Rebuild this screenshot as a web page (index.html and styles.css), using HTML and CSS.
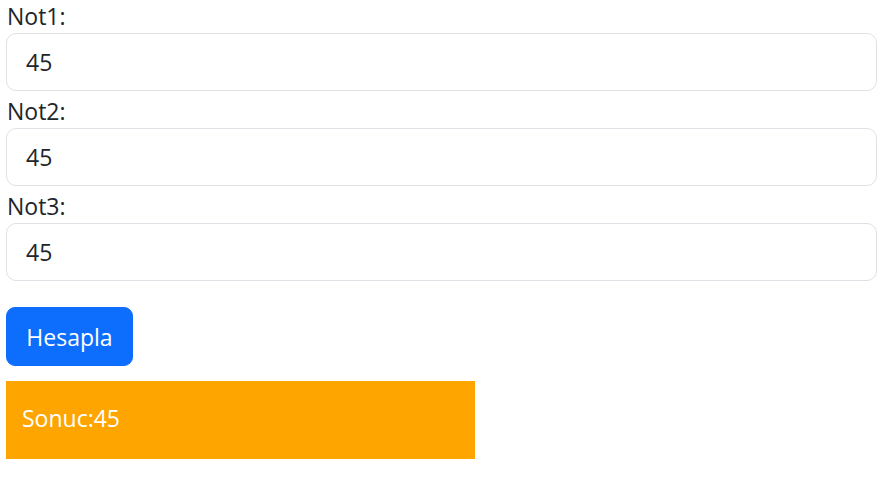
FILE: index.html
```html
<!DOCTYPE html>
<html lang="tr">
<head>
<meta charset="utf-8">
<title>Not Hesapla</title>
<link rel="stylesheet" href="styles.css">
</head>
<body>
<div class="page">
  <form class="form">
    <label class="label" for="n1">Not1:</label>
    <input class="field" id="n1" type="text" value="45">
    <label class="label" for="n2">Not2:</label>
    <input class="field" id="n2" type="text" value="45">
    <label class="label" for="n3">Not3:</label>
    <input class="field" id="n3" type="text" value="45">
    <button class="btn" type="button">Hesapla</button>
  </form>
  <div class="result">Sonuc:45</div>
</div>
</body>
</html>
```
FILE: styles.css
```css
html, body {
  margin: 0;
  padding: 0;
  background: #ffffff;
}

body {
  font-family: "Open Sans", "Noto Sans", "Liberation Sans", sans-serif;
  font-size: 23px;
  color: #212529;
}

.page {
  padding: 0 6px;
}

.form {
  display: flex;
  flex-direction: column;
  align-items: stretch;
}

.label {
  display: block;
  line-height: 32px;
  margin-bottom: 1px;
  padding-left: 1px;
}

.field {
  box-sizing: border-box;
  height: 58px;
  margin: 0 0 4px 0;
  padding: 0 19px;
  border: 1px solid #dee2e6;
  border-radius: 10px;
  font-family: inherit;
  font-size: 23px;
  color: #212529;
  background: #ffffff;
  outline: none;
}

.btn {
  align-self: flex-start;
  box-sizing: border-box;
  width: 127px;
  height: 59px;
  margin-top: 22px;
  padding: 0;
  border: 1px solid #0d6efd;
  border-radius: 9px;
  background: #0d6efd;
  color: #ffffff;
  font-family: inherit;
  font-size: 23px;
  cursor: pointer;
}

.result {
  box-sizing: border-box;
  width: 469px;
  height: 78px;
  margin-top: 15px;
  padding: 0 16px 4px;
  display: flex;
  align-items: center;
  background: #ffa500;
  color: #ffffff;
  font-size: 23px;
}
```
